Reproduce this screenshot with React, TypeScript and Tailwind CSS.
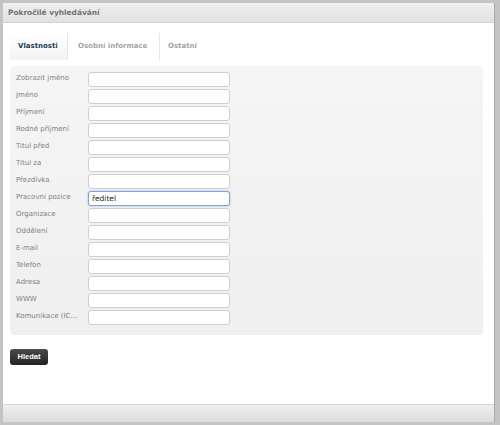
import React from "react";

const labels = [
  "Zobrazit jméno",
  "Jméno",
  "Příjmení",
  "Rodné příjmení",
  "Titul před",
  "Titul za",
  "Přezdívka",
  "Pracovní pozice",
  "Organizace",
  "Oddělení",
  "E-mail",
  "Telefon",
  "Adresa",
  "WWW",
  "Komunikace (IC...",
];

export default function App() {
  return (
    <div
      className="w-[500px] h-[425px] bg-[#c4c4c4] pt-[3px] pl-[3px] pr-[5px] pb-[3px] flex flex-col"
      style={{ fontFamily: '"DejaVu Sans", Verdana, sans-serif' }}
    >
      <div className="flex-1 flex flex-col bg-white border-r border-[#a9a9a9]">
        <div className="h-[20px] bg-gradient-to-b from-[#efefef] to-[#e1e1e1] border-b border-[#d2d2d2] flex items-center px-[5px]">
          <span className="text-[7.4px] font-bold text-[#727272]">Pokročilé vyhledávání</span>
        </div>
        <div className="flex-1 flex flex-col px-[7px] pt-[10px]">
          <div className="flex h-[27px] text-[7px] font-bold">
            <div className="px-[8px] flex items-center bg-gradient-to-b from-white to-[#f3f3f3] text-[#213b57] border-r border-[#e6e6e6] w-[58px]">
              Vlastnosti
            </div>
            <div className="px-[10px] flex items-center text-[#a3a3a3] border-r border-[#e6e6e6] w-[92px]">
              Osobní informace
            </div>
            <div className="px-[8px] flex items-center text-[#a3a3a3]">Ostatní</div>
          </div>
          <div className="mt-[6px] mr-[4px] rounded-[4px] bg-gradient-to-b from-[#f5f5f5] to-[#efefef] pt-[6px] pb-[8px] px-[6px] flex flex-col">
            {labels.map((l, i) => (
              <div key={i} className="flex h-[17px]">
                <div className="w-[72px] text-[7px] text-[#808080] pt-[1px] whitespace-nowrap overflow-hidden">
                  {l}
                </div>
                {i === 7 ? (
                  <div className="w-[142px] h-[15px] rounded-[3px] border border-[#7ea6d3] bg-white shadow-[0_0_2px_#8fb4dd] flex items-center px-[3px] text-[7.5px] text-[#222]">
                    ředitel
                  </div>
                ) : (
                  <div className="w-[142px] h-[15px] rounded-[3px] border border-[#cfcfcf] bg-white" />
                )}
              </div>
            ))}
          </div>
          <div className="mt-[14px]">
            <div
              className="w-[38px] h-[16px] rounded-[3px] bg-gradient-to-b from-[#4a4a4a] to-[#232323] flex items-center justify-center text-white text-[7.5px] font-bold"
              style={{ fontFamily: '"Liberation Sans", Arial, sans-serif' }}
            >
              Hledat
            </div>
          </div>
        </div>
        <div className="h-[18px] bg-gradient-to-b from-[#eeeeee] to-[#dcdcdc] border-t border-[#d4d4d4]" />
      </div>
    </div>
  );
}
